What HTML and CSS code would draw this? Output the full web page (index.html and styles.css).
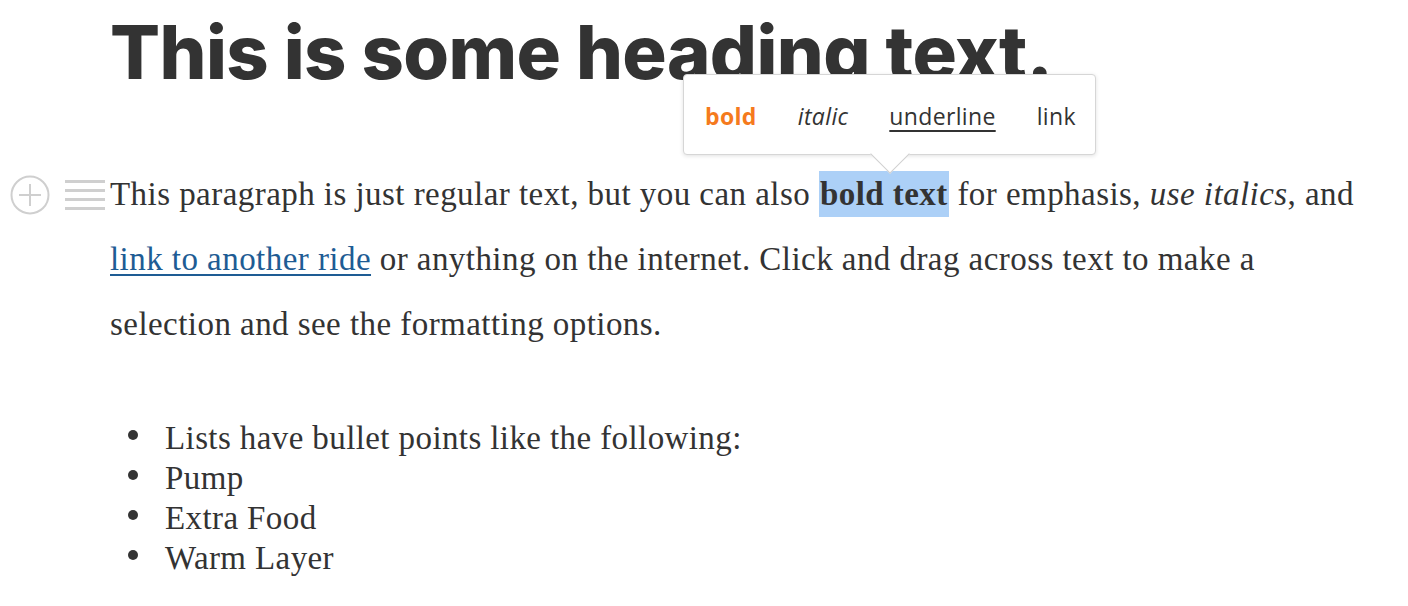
FILE: index.html
```html
<!DOCTYPE html>
<html>
<head>
<meta charset="utf-8">
<link rel="stylesheet" href="styles.css">
</head>
<body>
<div class="page">
  <h1 class="title">This is some heading text.</h1>
  <div class="block">
    <div class="gutter">
      <svg class="icon-plus" width="40" height="40" viewBox="0 0 40 40">
        <circle cx="20" cy="20" r="18.5" fill="none" stroke="#cfcfcf" stroke-width="2"/>
        <path d="M20 9V31M9 20H31" stroke="#cfcfcf" stroke-width="2"/>
      </svg>
      <svg class="icon-lines" width="40" height="32" viewBox="0 0 40 32">
        <path d="M0 2.5H40M0 11.5H40M0 20.5H40M0 29.5H40" stroke="#cfcfcf" stroke-width="3"/>
      </svg>
    </div>
    <p class="para">This paragraph is just regular text, but you can also <span class="sel"><b>bold text</b></span> for emphasis, <i>use italics</i>, and <a href="#" class="lnk">link to another ride</a> or anything on the internet. Click and drag across text to make a selection and see the formatting options.</p>
  </div>
  <ul class="list">
    <li>Lists have bullet points like the following:</li>
    <li>Pump</li>
    <li>Extra Food</li>
    <li>Warm Layer</li>
  </ul>
</div>
<div class="toolbar">
  <span class="tb-item tb-bold">bold</span>
  <span class="tb-item tb-italic">italic</span>
  <span class="tb-item tb-under">underline</span>
  <span class="tb-item">link</span>
  <span class="tb-arrow"></span>
</div>
</body>
</html>
```
FILE: styles.css
```css
html, body {
  margin: 0;
  padding: 0;
  background: #fff;
  color: #333;
}
.page {
  padding-left: 110px;
}
.title {
  font-family: "Inter", "Liberation Sans", sans-serif;
  font-weight: 800;
  font-size: 74px;
  letter-spacing: -0.6px;
  line-height: 100px;
  margin: 0;
  padding-top: 2px;
  color: #333;
}
.block {
  position: relative;
  margin-top: 60px;
  width: 1260px;
}
.gutter {
  position: absolute;
  left: -100px;
  top: 13px;
  display: flex;
  align-items: center;
  gap: 15px;
}
.icon-plus, .icon-lines { display: block; }
.para {
  margin: 0;
  font-family: "Liberation Serif", serif;
  font-size: 33px;
  letter-spacing: 0.45px;
  line-height: 65px;
  color: #333;
}
.sel {
  background: #acd0f7;
  padding: 5px 1px;
}
.lnk {
  color: #1e5c94;
  text-decoration: underline;
  text-underline-offset: 4px;
  text-decoration-thickness: 2px;
}
.list {
  list-style: none;
  margin: 61px 0 0 0;
  padding-left: 55px;
  font-family: "Liberation Serif", serif;
  font-size: 33px;
  letter-spacing: 0.4px;
  line-height: 40px;
  color: #333;
}
.list li::before {
  content: "";
  display: inline-block;
  width: 10px;
  height: 10px;
  border-radius: 50%;
  background: #333;
  margin-left: -37px;
  margin-right: 27px;
  vertical-align: 0.26em;
}
.toolbar {
  position: absolute;
  left: 683px;
  top: 74px;
  width: 413px;
  height: 81px;
  box-sizing: border-box;
  background: #fff;
  border: 1px solid #d6d6d6;
  border-radius: 4px;
  box-shadow: 0 1px 4px rgba(0,0,0,0.12);
  display: flex;
  align-items: center;
  padding-left: 21px;
  gap: 41px;
  font-family: "Open Sans", "Liberation Sans", sans-serif;
  font-size: 23px;
  letter-spacing: 0.35px;
  color: #333;
}
.tb-item { display: block; line-height: 30px; margin-top: 2px; }
.tb-bold { color: #f57a1d; font-weight: 700; }
.tb-italic { font-style: italic; }
.tb-under { text-decoration: underline; text-underline-offset: 5px; }
.tb-arrow {
  position: absolute;
  left: 192px;
  bottom: -14px;
  width: 27px;
  height: 27px;
  background: #fff;
  border-right: 1px solid #d0d0d0;
  border-bottom: 1px solid #d0d0d0;
  transform: rotate(45deg);
}
```
